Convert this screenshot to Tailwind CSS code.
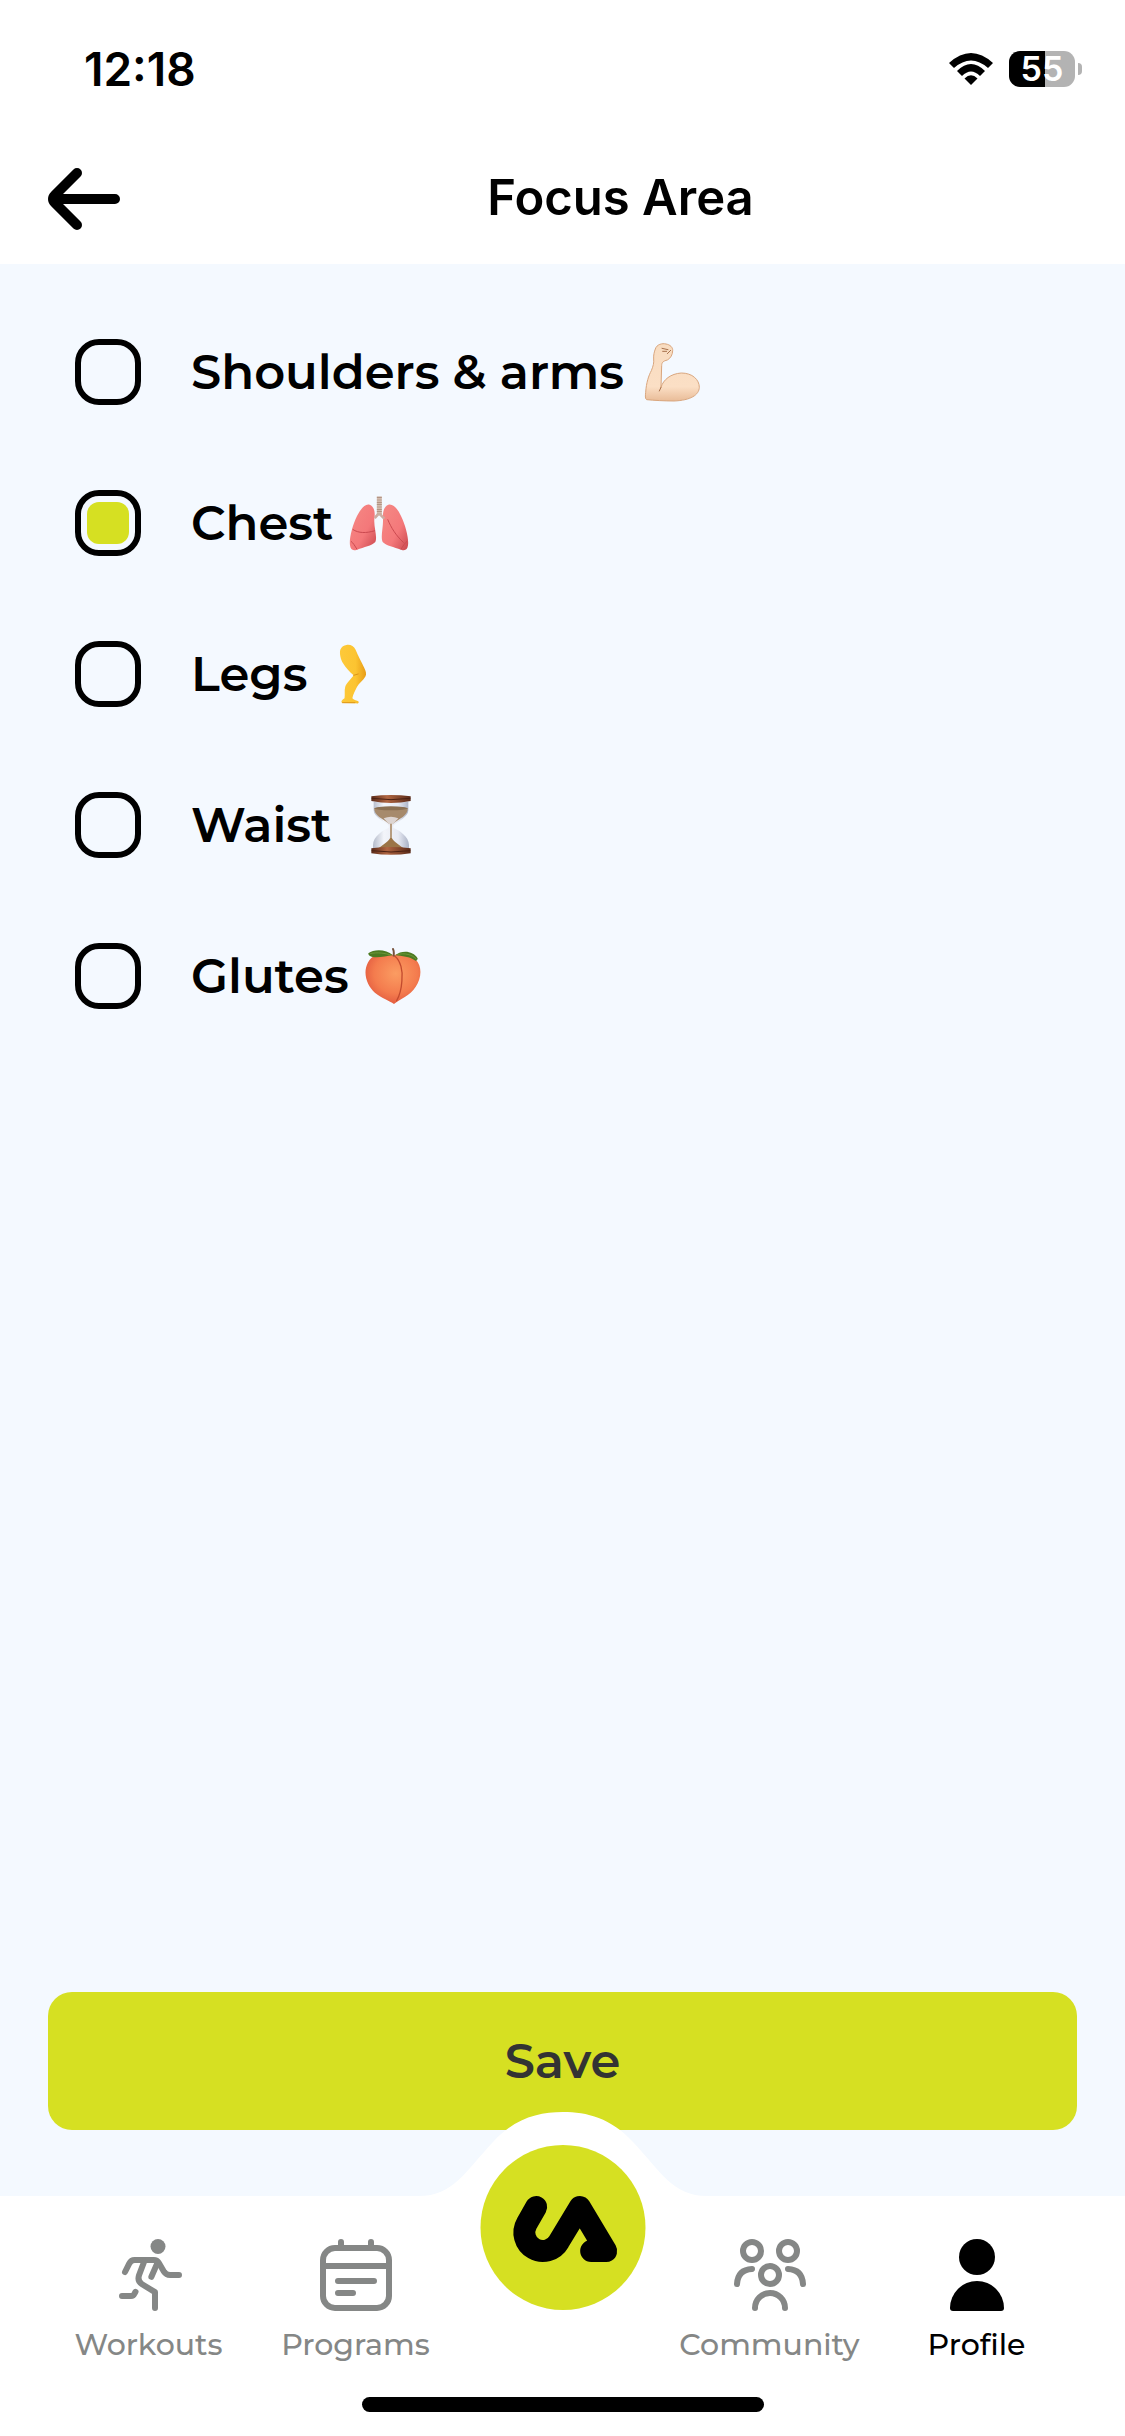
<!DOCTYPE html>
<html lang="en">
<head>
  <meta charset="UTF-8">
  <meta name="viewport" content="width=device-width, initial-scale=1.0">
  <title>Focus Area</title>
  <script src="https://cdn.jsdelivr.net/npm/@tailwindcss/browser@4"></script>
</head>
<body class="min-h-screen flex flex-col bg-white text-black font-['Montserrat',Inter,sans-serif]">

  <!-- Status bar -->
  <div class="h-33 pt-1.5 pl-21 pr-[43px] flex items-center justify-between font-[Inter,sans-serif]">
    <span class="text-[46px] font-semibold">12:18</span>
    <div class="flex items-center gap-4">
      <svg class="w-11 h-8" viewBox="0 0 44 32" aria-label="Wi-Fi">
        <path d="M0 10 Q22 -10 44 10 L39 15 Q22 0 5 15Z"/>
        <path d="M8 18 Q22 4 36 18 L31 23 Q22 14 13 23Z"/>
        <path d="M15.500 25.500 Q22 19 28.500 25.500 L22 32Z"/>
      </svg>
      <div class="flex items-center gap-[3px]">
        <div class="w-[66px] h-9 rounded-[11px] bg-linear-to-r from-black from-55% to-[#b3b3b3] to-55% flex items-center justify-center text-[34px] font-semibold leading-none text-white">55</div>
        <div class="w-1 h-3 rounded-r-full bg-[#b3b3b3]"></div>
      </div>
    </div>
  </div>

  <!-- Header -->
  <header class="h-33 pl-12 pr-1 flex items-center">
    <button type="button" aria-label="Back">
      <svg class="w-18 h-16" viewBox="0 0 72 64" fill="none" stroke="black" stroke-width="10" stroke-linecap="round" stroke-linejoin="round">
        <path d="M29 7 L7 29 Q3 33 7 37 L29 59 M8 33 H67"/>
      </svg>
    </button>
    <h1 class="flex-1 text-center text-[49px] font-semibold font-[Inter,sans-serif]">Focus Area</h1>
  </header>

  <!-- Options -->
  <main class="flex-1 flex flex-col bg-[#f4f9ff] px-12 pt-[75px] pb-[66px]">
    <div class="flex flex-col gap-[85px] pl-[27px] text-[48px] leading-[66px] font-semibold">
      <label class="flex items-center">
        <input type="checkbox" class="appearance-none size-[66px] mr-[50px] p-1.5 border-6 border-black rounded-3xl bg-clip-content checked:bg-[#d6e022]">
        Shoulders &amp; arms
        <svg class="w-14 h-15 ml-5" viewBox="0 0 168 178" role="img" aria-label="Flexed arm">
          <defs>
            <linearGradient id="skin" x1="0" y1="0" x2="0" y2="1">
              <stop offset="0" stop-color="#f8dcc0"/>
              <stop offset=".75" stop-color="#fbdfc5"/>
              <stop offset="1" stop-color="#e9bc98"/>
            </linearGradient>
          </defs>
          <path fill="url(#skin)" stroke="#d9a67e" stroke-width="3" d="M34 20C38 6 55 2 66 5C78 7 87 15 86 25C86 36 80 48 70 53C58 56 53 60 53 70L51 135C58 112 80 94 112 92C145 92 166 112 166 135C165 158 140 174 90 176C60 176 30 174 8 172C3 170 4 160 5 150C7 120 14 100 22 85C28 70 30 62 29 50C28 38 31 28 34 20Z"/>
          <path fill="none" stroke="#a8714c" stroke-width="3" stroke-linecap="round" d="M54 18L72 22M56 27L68 27M70 34L80 24M51 135L46 146"/>
        </svg>
      </label>

      <label class="flex items-center">
        <input type="checkbox" checked class="appearance-none size-[66px] mr-[50px] p-1.5 border-6 border-black rounded-3xl bg-clip-content checked:bg-[#d6e022]">
        Chest
        <svg class="w-15 h-[55px] ml-4" viewBox="0 0 180 165" role="img" aria-label="Lungs">
          <defs>
            <linearGradient id="lung" x1="0" y1="0" x2="1" y2="1">
              <stop offset="0" stop-color="#f58a85"/>
              <stop offset=".6" stop-color="#f4787a"/>
              <stop offset="1" stop-color="#c9474e"/>
            </linearGradient>
          </defs>
          <path fill="url(#lung)" d="M62 26C48 22 36 38 24 60C10 88 0 130 3 148C5 162 12 165 24 161C45 153 68 150 79 138C86 122 74 94 76 70C80 46 74 30 62 26Z"/>
          <path fill="url(#lung)" d="M118 26C132 22 146 38 156 60C170 88 180 130 177 148C175 162 168 165 156 161C135 153 112 150 101 138C94 122 103 94 102 70C100 46 106 30 118 26Z"/>
          <path fill="none" stroke="#cb4a50" stroke-width="3" d="M11 100C28 112 52 112 78 104M6 136C12 140 18 150 24 160M174 136C168 140 162 150 156 160M116 70C126 94 140 118 164 140"/>
          <path fill="none" stroke="#cdaaa0" stroke-width="8" d="M90 52L77 66M90 52L106 68"/>
          <path fill="none" stroke="#d3bcae" stroke-width="15" d="M91 1V58"/>
          <path fill="none" stroke="#a98777" stroke-width="15" stroke-dasharray="2 5" d="M91 4V58"/>
        </svg>
      </label>

      <label class="flex items-center">
        <input type="checkbox" class="appearance-none size-[66px] mr-[50px] p-1.5 border-6 border-black rounded-3xl bg-clip-content checked:bg-[#d6e022]">
        Legs
        <svg class="w-7 h-15 ml-8" viewBox="0 0 84 184" role="img" aria-label="Leg">
          <defs>
            <linearGradient id="leg" x1="0" y1="0" x2="1" y2="0">
              <stop offset="0" stop-color="#fdc93a"/>
              <stop offset=".6" stop-color="#fcc431"/>
              <stop offset="1" stop-color="#e79c17"/>
            </linearGradient>
          </defs>
          <path fill="url(#leg)" d="M22 3C34 1 44 6 50 18C58 38 68 56 76 72C82 84 84 92 80 100C74 112 60 120 54 132C48 144 42 156 40 166C46 172 54 172 59 176C61 182 56 183 50 182L10 181C4 178 6 172 16 166C18 154 15 144 18 132C22 118 38 106 44 96C32 86 20 74 12 60C4 48 0 30 3 18C7 8 14 4 22 3Z"/>
          <path fill="none" stroke="#dc9318" stroke-width="3" stroke-linecap="round" d="M44 96L58 92M10 180H48"/>
        </svg>
      </label>

      <label class="flex items-center">
        <input type="checkbox" class="appearance-none size-[66px] mr-[50px] p-1.5 border-6 border-black rounded-3xl bg-clip-content checked:bg-[#d6e022]">
        Waist
        <svg class="w-10 h-15 ml-10" viewBox="0 0 120 180" role="img" aria-label="Hourglass">
          <defs>
            <linearGradient id="wood" x1="0" y1="0" x2="1" y2="0">
              <stop offset="0" stop-color="#5a2a18"/>
              <stop offset=".4" stop-color="#b06642"/>
              <stop offset="1" stop-color="#5a2a18"/>
            </linearGradient>
            <linearGradient id="glass" x1="0" y1="0" x2="1" y2="0">
              <stop offset="0" stop-color="#b5bccb"/>
              <stop offset=".3" stop-color="#f3f5fa"/>
              <stop offset=".7" stop-color="#e7eaf3"/>
              <stop offset="1" stop-color="#aab2c6"/>
            </linearGradient>
          </defs>
          <path fill="url(#glass)" d="M8 20H112V46C112 66 82 78 67 92V98C84 106 114 124 114 150V164H6V150C6 124 36 106 53 98V92C38 78 8 66 8 46Z"/>
          <path fill="#a68a6c" d="M10 40Q60 32 110 40C112 62 84 72 66 86H54C36 72 8 62 10 40Z"/>
          <ellipse cx="60" cy="40" rx="50" ry="6" fill="#8b7052"/>
          <path fill="#ddd5d2" d="M38 70Q60 60 82 70L66 88H54Z"/>
          <path fill="#9b7446" d="M58 86H62V128C70 142 86 150 98 160H22C34 150 50 142 58 128Z"/>
          <path fill="url(#wood)" d="M1 4Q60 -4 119 4V18Q60 30 1 18Z"/>
          <path fill="url(#wood)" d="M1 160Q60 152 119 160V175Q60 184 1 175Z"/>
          <path fill="none" stroke="#4b2113" stroke-width="3" d="M2 10Q60 18 118 10M2 167Q60 175 118 167"/>
        </svg>
      </label>

      <label class="flex items-center">
        <input type="checkbox" class="appearance-none size-[66px] mr-[50px] p-1.5 border-6 border-black rounded-3xl bg-clip-content checked:bg-[#d6e022]">
        Glutes
        <svg class="size-14 ml-4" viewBox="0 0 170 170" role="img" aria-label="Peach">
          <defs>
            <radialGradient id="peach" cx=".55" cy=".4" r=".65">
              <stop offset="0" stop-color="#fb9c62"/>
              <stop offset=".6" stop-color="#f47c4e"/>
              <stop offset="1" stop-color="#e0563d"/>
            </radialGradient>
          </defs>
          <path fill="url(#peach)" d="M88 23C60 8 25 16 9 44C-8 76 6 114 30 136C52 154 74 160 88 170C106 156 136 146 154 118C172 90 174 56 154 36C136 16 108 12 88 23Z"/>
          <path fill="none" stroke="#c24a2e" stroke-width="4" stroke-linecap="round" d="M90 24C108 38 116 70 112 100C110 130 104 146 96 160"/>
          <path fill="#4c7a22" d="M84 22C66 4 28 2 10 16C10 24 20 28 34 28C52 28 68 24 84 22Z"/>
          <path fill="#4c7a22" d="M92 22C112 6 146 8 160 32C158 38 156 40 152 38C136 26 112 24 92 22Z"/>
          <path fill="none" stroke="#7fa544" stroke-width="2" d="M16 17C38 12 62 16 80 22M98 20C120 14 144 20 156 34"/>
          <path fill="none" stroke="#76513c" stroke-width="6" stroke-linecap="round" d="M85 3C88 8 88 14 87 23"/>
        </svg>
      </label>
    </div>

    <button type="button" class="mt-auto h-[138px] rounded-3xl bg-[#d6e022] text-[48px] font-semibold text-[#333]">Save</button>
  </main>

  <!-- Bottom navigation -->
  <nav class="relative h-60 px-[45px] pb-6 flex flex-col justify-between bg-white">
    <!-- Raised hump behind the centre button -->
    <svg class="absolute bottom-full left-1/2 -translate-x-1/2 w-[300px] h-[84px]" viewBox="0 0 300 84" fill="white">
      <path d="M6 84C40 84 52 60 80 30C102 6 126 0 150 0C174 0 198 6 220 30C248 60 260 84 294 84Z"/>
    </svg>
    <a href="#" aria-label="Home" class="absolute -top-[51px] left-1/2 -translate-x-1/2 size-[165px] rounded-full bg-[#d6e022]">
      <svg viewBox="0 0 495 495" fill="none" stroke="black" stroke-width="66" stroke-linecap="round" stroke-linejoin="round">
        <path d="M167 186L139 235A55 55 0 0 0 235 290L298 186L377 318H332"/>
      </svg>
    </a>

    <div class="grid grid-cols-5 pt-[43px] text-[30px] leading-9 font-medium text-[#858786]">
      <a href="#" class="flex flex-col items-center gap-4">
        <svg class="size-18" viewBox="0 0 24 24" fill="none" stroke="currentColor" stroke-width="2" stroke-linecap="round" stroke-linejoin="round">
          <circle cx="15" cy="2.500" r="2.500" fill="currentColor" stroke="none"/>
          <path d="M4 11L5.400 8.200Q6 7 7.200 7H13.600Q14.700 7 15.300 8L17 10.900Q17.700 12 19 12H22"/>
          <path d="M10.400 7.500L8.700 12Q8 14 9.700 15.100L14 17.700V23M14.700 8.200L12.800 12.600M3 19H6Q6.800 19 7.100 18.300L7.500 17.600"/>
        </svg>
        Workouts
      </a>
      <a href="#" class="flex flex-col items-center gap-4">
        <svg class="size-18" viewBox="0 0 24 24" fill="none" stroke="currentColor" stroke-width="2" stroke-linecap="round">
          <rect x="1" y="3" width="22" height="20" rx="4"/>
          <path d="M1 9H23M7 1V3M17 1V3M6 14H18M6 18H11"/>
        </svg>
        Programs
      </a>
      <a href="#" class="col-start-4 flex flex-col items-center gap-4">
        <svg class="size-18" viewBox="0 0 24 24" fill="none" stroke="currentColor" stroke-width="2" stroke-linecap="round">
          <circle cx="6" cy="4" r="3"/>
          <circle cx="18" cy="4" r="3"/>
          <circle cx="12" cy="12" r="3"/>
          <path d="M1 15Q1.300 10.200 6 10M23 15Q22.700 10.200 18 10M7 23A5 5 0 0 1 17 23"/>
        </svg>
        Community
      </a>
      <a href="#" class="flex flex-col items-center gap-4 text-black">
        <svg class="size-18" viewBox="0 0 24 24" fill="currentColor">
          <circle cx="12" cy="6" r="6"/>
          <path d="M3 23A9 9 0 0 1 21 23Q21 24 20 24H4Q3 24 3 23Z"/>
        </svg>
        Profile
      </a>
    </div>

    <!-- Home indicator -->
    <div class="mx-auto w-[402px] h-[15px] rounded-full bg-black"></div>
  </nav>

</body>
</html>
